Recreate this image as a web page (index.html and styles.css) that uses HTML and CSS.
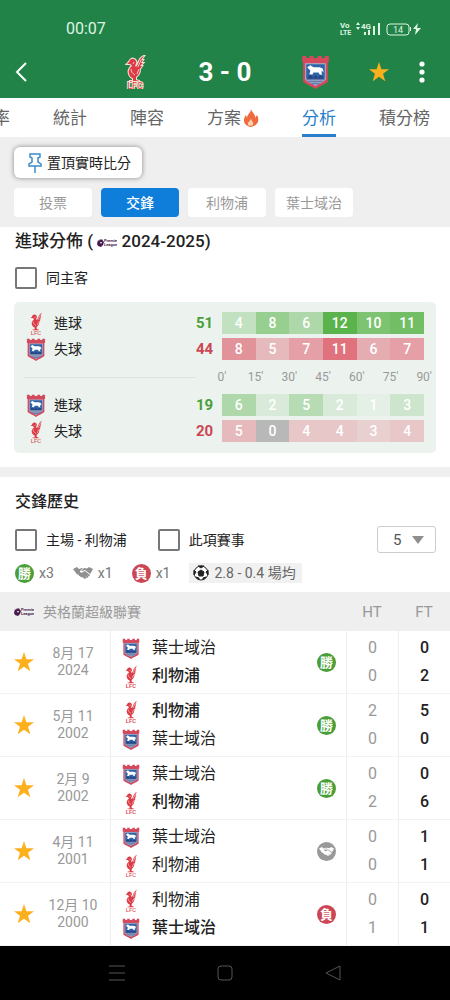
FILE: index.html
```html
<!DOCTYPE html>
<html lang="zh-Hant">
<head>
    <meta charset="utf-8">
    <meta name="viewport" content="width=device-width, initial-scale=1">
    <title>利物浦 3 - 0 葉士域治</title>
    <link rel="stylesheet" href="styles.css">
</head>
<body>
    <svg class="sprite" aria-hidden="true">
        <symbol id="lfc" viewBox="0 0 22 34">
            <path d="M20 1c-3 1-5 4-6 8l-2 3c-1-1-1-2 0-3 1-2 0-4-2-5C8 3 6 4 5 7l-2 2 3 0c1 1 2 1 2 2-3 2-4 5-3 8 1 3 3 4 4 4l0 3-3 0 0 1h9l0-1-3-1 0-3c3-2 4-5 4-8l2-3-2 0 3-3-2 0 2-3-2 0z"/>
            <path class="feather" d="M17 5l-3 7M15 14l-2 5M7 14c0 3 1 4 4 6M10 7l-1 2" fill="none"/>
            <text x="11" y="34" text-anchor="middle">LFC</text>
        </symbol>
        <symbol id="ipswich" viewBox="0 0 26 33">
            <path d="M0 1h4v2h3V1h4v2h4V1h4v2h3V1h4v6h-1v19c-3 3-8 4-12 7-4-3-9-4-12-7V7H0z" fill="#d5495d"/>
            <path d="M3 8h20v16c-3 3-7 4-10 6-3-2-7-3-10-6z" fill="#a9b3cf"/>
            <path d="M4 9h18v14H4z" fill="#2d65a8"/>
            <path d="M5 12l3-2 3 2h6l3 1 1 4-2-2 0 5-2-1-1-2h-5l-1 2-3 0 1-4-2-2z" fill="#fff"/>
            <path d="M5 22l3-3 3 3 2-3 2 3 3-3 3 3v1H5z" fill="#254583"/>
            <path d="M4 24h18M6 26h14M9 28h8" stroke="#51669f" stroke-width="1"/>
        </symbol>
        <symbol id="premier" viewBox="0 0 20 9">
            <path d="M1 2l1 1 1-2 1 1 1-1 1 2 1 1-1 3-2 2-3-1-1-2z" fill="#461b4d"/>
            <path d="M3 4l2 0-1 2z" fill="#fff"/>
            <text x="7" y="4" font-size="4">Premier</text>
            <text x="7" y="8" font-size="4">League</text>
        </symbol>
        <symbol id="star" viewBox="0 0 20 20">
            <path d="M10 0l2.400 7.200H20l-6 4.600 2.300 7.500L10 14.800l-6.300 4.500L6 11.800 0 7.200h7.600z" fill="#fdb01d"/>
        </symbol>
        <symbol id="shake" viewBox="0 0 20 12">
            <path d="M0 2l4-2 2 2 3-1 1 0-3 3c0 2 2 2 3 1l2-1 5 4-1 1.500-2-1.500 1.500 2-1.200 1-2.300-2 1.500 2-1.500 1-3-2-1 .5-1-1.500-1 0-.5-1.500-1.500 0L3 6z"/>
            <path d="M20 2l-4-2-2 1.500L11 1 8.300 3.700c.5.700 1.200.5 1.700 0L12 3l5.200 4z"/>
        </symbol>
    </svg>

    <header class="top">
        <div class="status">
            <span>00:07</span>
            <svg class="phone" viewBox="0 0 82 16" width="82" height="16">
                <g fill="#dff5e4" font-weight="700">
                    <text x="0" y="7" font-size="8">Vo</text>
                    <text x="0" y="14" font-size="7">LTE</text>
                    <text x="21" y="8" font-size="8">4G</text>
                    <text x="58" y="12" font-size="9" font-weight="400" text-anchor="middle">14</text>
                    <path d="M16 4l2-3 2 3zM16 6l2 3 2-3zM24 11h2v3h-2zM28 9h2v5h-2zM33 5h2v9h-2zM38 2h2v12h-2zM70 6h1v4h-1zM78 2l-5 6h3l-1 6 6-7h-4z"/>
                </g>
                <rect x="47" y="3" width="22" height="11" rx="3" fill="none" stroke="#dff5e4"/>
            </svg>
        </div>
        <div class="match">
            <button class="icon-btn back" aria-label="返回">
                <svg viewBox="0 0 12 20" width="12" height="20"><path d="M11 1L2 10l9 9" fill="none" stroke="#fff" stroke-width="2"/></svg>
            </button>
            <svg class="lfc outlined"><use href="#lfc"/></svg>
            <h1>3 - 0</h1>
            <svg class="ipswich"><use href="#ipswich"/></svg>
            <div class="actions">
                <button class="icon-btn" aria-label="收藏"><svg class="star"><use href="#star"/></svg></button>
                <button class="icon-btn" aria-label="更多">
                    <svg viewBox="0 0 6 24" width="6" height="24" fill="#fff"><circle cx="3" cy="4" r="2.600"/><circle cx="3" cy="12" r="2.600"/><circle cx="3" cy="20" r="2.600"/></svg>
                </button>
            </div>
        </div>
    </header>

    <nav class="tabs">
        <a href="#odds">率</a>
        <a href="#stats">統計</a>
        <a href="#lineup">陣容</a>
        <a href="#plans">方案<svg viewBox="0 0 16 18" width="16" height="18"><path d="M8 0c1 4 5 5 4 9l2-3c3 5 1 11-6 12C1 17-1 11 3 6l1 3c0-4 4-5 4-9z" fill="#ef6a3c"/><path d="M8 9c0 3 3 4 2 7-1 1-4 1-5 0-1-3 3-4 3-7z" fill="#fbd3ae"/></svg></a>
        <a href="#analysis" class="current">分析</a>
        <a href="#table">積分榜</a>
    </nav>

    <div class="sub">
        <button class="pin">
            <svg viewBox="0 0 14 20" width="14" height="20" fill="none" stroke="#3a8ccc" stroke-width="1.500"><path d="M2 1h10v3l-2 1v4l3 2v2H1v-2l3-2V5L2 4zM7 13v7"/></svg>
            置頂實時比分
        </button>
        <div class="chips">
            <button>投票</button>
            <button class="on">交鋒</button>
            <button>利物浦</button>
            <button>葉士域治</button>
        </div>
    </div>

    <section class="goals">
        <h2>進球分佈 ( <svg class="premier"><use href="#premier"/></svg> 2024-2025)</h2>
        <label class="check"><input type="checkbox">同主客</label>

        <div class="card">
            <table class="heat">
                <colgroup><col class="c-name"><col class="c-total"><col span="6"></colgroup>
                <tr class="scored">
                    <th><div class="side"><svg class="lfc"><use href="#lfc"/></svg>進球</div></th>
                    <td class="total">51</td>
                    <td style="--heat:.27">4</td><td style="--heat:.55">8</td><td style="--heat:.4">6</td><td style="--heat:.95">12</td><td style="--heat:.72">10</td><td style="--heat:.8">11</td>
                </tr>
                <tr class="lost">
                    <th><div class="side"><svg class="ipswich"><use href="#ipswich"/></svg>失球</div></th>
                    <td class="total">44</td>
                    <td style="--heat:.62">8</td><td style="--heat:.36">5</td><td style="--heat:.52">7</td><td style="--heat:.82">11</td><td style="--heat:.44">6</td><td style="--heat:.52">7</td>
                </tr>
                <tr class="axis">
                    <td><hr></td>
                    <td></td>
                    <td colspan="6"><div class="ticks"><span>0'</span><span>15'</span><span>30'</span><span>45'</span><span>60'</span><span>75'</span><span>90'</span></div></td>
                </tr>
                <tr class="scored">
                    <th><div class="side"><svg class="ipswich"><use href="#ipswich"/></svg>進球</div></th>
                    <td class="total">19</td>
                    <td style="--heat:.4">6</td><td style="--heat:.12">2</td><td style="--heat:.34">5</td><td style="--heat:.12">2</td><td style="--heat:.05">1</td><td style="--heat:.2">3</td>
                </tr>
                <tr class="lost">
                    <th><div class="side"><svg class="lfc"><use href="#lfc"/></svg>失球</div></th>
                    <td class="total">20</td>
                    <td style="--heat:.36">5</td><td class="zero">0</td><td style="--heat:.28">4</td><td style="--heat:.28">4</td><td style="--heat:.22">3</td><td style="--heat:.28">4</td>
                </tr>
            </table>
        </div>
    </section>

    <section class="history">
        <h2>交鋒歷史</h2>
        <div class="filters">
            <label class="check"><input type="checkbox">主場 - 利物浦</label>
            <label class="check"><input type="checkbox">此項賽事</label>
            <div class="count">
                <select aria-label="場數"><option>5</option></select>
                <svg viewBox="0 0 12 8" width="12" height="8"><path d="M0 0h12L6 8z" fill="#8f8f8f"/></svg>
            </div>
        </div>
        <div class="summary">
            <span><b class="badge win">勝</b>x3</span>
            <span><svg class="shake"><use href="#shake"/></svg>x1</span>
            <span><b class="badge loss">負</b>x1</span>
            <span class="avg"><svg viewBox="0 0 16 16" width="16" height="16"><circle cx="8" cy="8" r="7" fill="#fff" stroke="#222"/><path d="M8 5l3 2-1 4H6L5 7zM5 1h6L8 3zM1 5l2 2-2 3zM15 5l-2 2 2 3zM3 12l3 1 0 2zM13 12l-3 1 0 2z" fill="#222" stroke="#222"/></svg>2.8 - 0.4 場均</span>
        </div>

        <table class="games">
            <colgroup><col class="c-star"><col class="c-date"><col><col class="c-score"><col class="c-score"></colgroup>
            <thead>
                <tr>
                    <th colspan="3"><div class="league"><svg class="premier"><use href="#premier"/></svg>英格蘭超級聯賽</div></th>
                    <th>HT</th>
                    <th>FT</th>
                </tr>
            </thead>
            <tbody>
                <tr>
                    <td><button class="icon-btn" aria-label="收藏"><svg class="star"><use href="#star"/></svg></button></td>
                    <td class="date">8月 17<br>2024</td>
                    <td class="teams"><div>
                        <ul>
                            <li><svg class="ipswich"><use href="#ipswich"/></svg>葉士域治</li>
                            <li class="won"><svg class="lfc"><use href="#lfc"/></svg>利物浦</li>
                        </ul>
                        <b class="badge win">勝</b>
                    </div></td>
                    <td class="ht">0<br>0</td>
                    <td class="ft">0<br>2</td>
                </tr>
                <tr>
                    <td><button class="icon-btn" aria-label="收藏"><svg class="star"><use href="#star"/></svg></button></td>
                    <td class="date">5月 11<br>2002</td>
                    <td class="teams"><div>
                        <ul>
                            <li class="won"><svg class="lfc"><use href="#lfc"/></svg>利物浦</li>
                            <li><svg class="ipswich"><use href="#ipswich"/></svg>葉士域治</li>
                        </ul>
                        <b class="badge win">勝</b>
                    </div></td>
                    <td class="ht">2<br>0</td>
                    <td class="ft">5<br>0</td>
                </tr>
                <tr>
                    <td><button class="icon-btn" aria-label="收藏"><svg class="star"><use href="#star"/></svg></button></td>
                    <td class="date">2月 9<br>2002</td>
                    <td class="teams"><div>
                        <ul>
                            <li><svg class="ipswich"><use href="#ipswich"/></svg>葉士域治</li>
                            <li class="won"><svg class="lfc"><use href="#lfc"/></svg>利物浦</li>
                        </ul>
                        <b class="badge win">勝</b>
                    </div></td>
                    <td class="ht">0<br>2</td>
                    <td class="ft">0<br>6</td>
                </tr>
                <tr>
                    <td><button class="icon-btn" aria-label="收藏"><svg class="star"><use href="#star"/></svg></button></td>
                    <td class="date">4月 11<br>2001</td>
                    <td class="teams"><div>
                        <ul>
                            <li><svg class="ipswich"><use href="#ipswich"/></svg>葉士域治</li>
                            <li><svg class="lfc"><use href="#lfc"/></svg>利物浦</li>
                        </ul>
                        <b class="badge draw"><svg class="shake"><use href="#shake"/></svg></b>
                    </div></td>
                    <td class="ht">0<br>0</td>
                    <td class="ft">1<br>1</td>
                </tr>
                <tr>
                    <td><button class="icon-btn" aria-label="收藏"><svg class="star"><use href="#star"/></svg></button></td>
                    <td class="date">12月 10<br>2000</td>
                    <td class="teams"><div>
                        <ul>
                            <li><svg class="lfc"><use href="#lfc"/></svg>利物浦</li>
                            <li class="won"><svg class="ipswich"><use href="#ipswich"/></svg>葉士域治</li>
                        </ul>
                        <b class="badge loss">負</b>
                    </div></td>
                    <td class="ht">0<br>1</td>
                    <td class="ft">0<br>1</td>
                </tr>
            </tbody>
        </table>
    </section>

    <footer class="keys">
        <button class="icon-btn" aria-label="選單"><svg viewBox="0 0 16 16" width="16" height="16"><path d="M0 1h16M0 8h16M0 15h16"/></svg></button>
        <button class="icon-btn" aria-label="主頁"><svg viewBox="0 0 16 16" width="16" height="16"><rect x="1" y="1" width="14" height="14" rx="3"/></svg></button>
        <button class="icon-btn" aria-label="返回"><svg viewBox="0 0 16 16" width="16" height="16"><path d="M15 1v14L1 8z"/></svg></button>
    </footer>
</body>
</html>
```

FILE: styles.css
```css
* {
    box-sizing: border-box;
}
body {
    margin: 0;
    min-height: 100vh;
    display: flex;
    flex-direction: column;
    background: #fff;
    color: #222;
    font-family: Roboto, "Noto Sans CJK TC", sans-serif;
    font-size: 14px;
    line-height: 20px;
}
button, select, input {
    font: inherit;
    color: inherit;
    margin: 0;
}
button {
    border: none;
    background: none;
    padding: 0;
    cursor: pointer;
}
svg {
    display: block;
    flex: none;
}
h1, h2 {
    margin: 0;
}
h2 {
    font-size: 16px;
    line-height: 24px;
    font-weight: 500;
}
.sprite {
    display: none;
}
.icon-btn {
    display: flex;
    align-items: center;
    justify-content: center;
}

/* crests and small icons */
.lfc {
    width: 20px;
    height: 23px;
    fill: #dd3c46;
    font-size: 9px;
}
.feather {
    stroke: #f8c8c8;
    stroke-width: 1;
}
.ipswich {
    width: 20px;
    height: 23px;
}
.star {
    width: 20px;
    height: 20px;
}
.premier {
    width: 20px;
    height: 9px;
    fill: #461b4d;
    font-weight: 700;
}
.shake {
    width: 20px;
    height: 12px;
    fill: #8f8f8f;
}
.badge {
    display: flex;
    align-items: center;
    justify-content: center;
    width: 19px;
    height: 19px;
    border-radius: 50%;
    color: #fff;
    font-size: 13px;
    line-height: 19px;
}
.win {
    background: #4a9e38;
}
.loss {
    background: #cc4654;
}
.draw {
    background: #999;
}
.draw .shake {
    width: 15px;
    height: 9px;
    fill: #fff;
}

/* header */
.top {
    background: #228348;
    color: #fff;
    height: 98px;
}
.status {
    display: flex;
    justify-content: space-between;
    align-items: center;
    height: 46px;
    padding: 12px 28px 0 66px;
    font-size: 16px;
    color: #dff5e4;
}
.match {
    display: grid;
    grid-template-columns: 1fr 40px 140px 40px 1fr;
    align-items: center;
    justify-items: center;
    height: 52px;
}
.match h1 {
    font-size: 26px;
    line-height: 32px;
    font-weight: 700;
}
.match .back {
    justify-self: start;
    margin-left: 15px;
}
.match .lfc {
    width: 22px;
    height: 34px;
}
.outlined {
    stroke: #fbe3d6;
    stroke-width: 2;
    paint-order: stroke;
}
.match .ipswich {
    width: 27px;
    height: 34px;
}
.actions {
    justify-self: end;
    display: flex;
    gap: 30px;
    margin-right: 25px;
}

.tabs {
    display: flex;
    gap: 43px;
    margin-left: -7px;
    height: 39px;
    overflow: hidden;
    white-space: nowrap;
    font-size: 17px;
    line-height: 32px;
}
.tabs a {
    display: flex;
    align-items: center;
    flex: none;
    color: #666;
    text-decoration: none;
    border-bottom: 3px solid transparent;
    padding-top: 4px;
}
.tabs svg {
    margin-left: 2px;
}
.tabs .current {
    color: #2b7fca;
    border-color: #2b7fca;
}

.sub {
    background: #efefef;
    padding: 10px 14px;
}
.pin {
    display: flex;
    align-items: center;
    gap: 5px;
    height: 31px;
    padding: 0 11px 0 14px;
    background: #fff;
    border-radius: 6px;
    box-shadow: 0 0 5px rgba(0,0,0,0.45);
}
.chips {
    display: flex;
    gap: 9px;
    margin-top: 10px;
}
.chips button {
    width: 78px;
    height: 29px;
    border-radius: 4px;
    background: #fff;
    color: #999;
}
.chips .on {
    background: #0f7edb;
    color: #fff;
    font-weight: 500;
}

.check {
    display: flex;
    align-items: center;
    gap: 9px;
}
.check input {
    appearance: none;
    width: 22px;
    height: 22px;
    border: 2px solid #777;
    border-radius: 2px;
}
.check input:checked {
    background: #0f7edb;
}

/* goal distribution */
.goals {
    padding: 2px 14px 14px;
    border-bottom: 10px solid #efefef;
}
.goals h2 {
    font-size: 17px;
    font-weight: 500;
    padding-left: 1px;
}
.goals h2 svg {
    display: inline-block;
    vertical-align: middle;
}
.goals .check {
    margin: 14px 0 13px 1px;
}
.card {
    background: #ecf3ef;
    border-radius: 5px;
    padding: 6px 12px 7px 10px;
}
.heat {
    width: 100%;
    table-layout: fixed;
    border-collapse: separate;
    border-spacing: 0 4px;
}
.c-name {
    width: 43%;
}
.c-total {
    width: 26px;
}
.heat tr {
    height: 22px;
}
.heat th, .heat td {
    padding: 0;
    line-height: 22px;
    text-align: center;
    font-weight: 500;
    color: #fff;
}
.heat th {
    color: #222;
    font-weight: 400;
}
.side {
    display: flex;
    align-items: center;
    gap: 8px;
    height: 22px;
    padding-left: 2px;
}
.scored td {
    background: rgba(82,176,65,var(--heat));
}
.lost td {
    background: rgba(220,85,100,var(--heat));
}
.heat .zero {
    background: #b8b8b8;
}
.heat .total {
    background: none;
    font-size: 15px;
    font-weight: 700;
    text-align: left;
}
.scored .total {
    color: #4a9e38;
}
.lost .total {
    color: #cc4654;
}
.heat .axis {
    height: 26px;
}
.axis hr {
    margin: 0;
    border: none;
    border-top: 1px solid #dde3df;
}
.ticks {
    display: flex;
    justify-content: space-between;
    margin: 0 -17px;
    color: #999;
    font-size: 12px;
    font-weight: 400;
}
.ticks span {
    flex: 1;
}

/* head to head */
.history {
    flex: 1;
    padding-top: 13px;
}
.history h2 {
    padding-left: 15px;
}
.filters {
    display: flex;
    align-items: center;
    gap: 31px;
    margin: 12px 14px 10px 15px;
}
.count {
    display: grid;
    align-items: center;
    margin-left: auto;
}
.count select, .count svg {
    grid-area: 1 / 1;
}
.count select {
    appearance: none;
    width: 59px;
    height: 27px;
    padding: 0 15px;
    border: 1px solid #ccc;
    border-radius: 3px;
    background: #fff;
    color: #555;
    font-size: 15px;
}
.count svg {
    justify-self: end;
    margin-right: 12px;
    pointer-events: none;
}
.summary {
    display: flex;
    gap: 19px;
    padding: 0 15px 9px;
    color: #777;
}
.summary span {
    display: flex;
    align-items: center;
    gap: 5px;
}
.summary .avg {
    padding: 0 6px 0 4px;
    background: #f1f1f1;
    color: #666;
}

.games {
    width: 100%;
    table-layout: fixed;
    border-collapse: separate;
    border-spacing: 0;
}
.c-star {
    width: 36px;
}
.c-date {
    width: 75px;
}
.c-score {
    width: 52px;
}
.games th, .games td {
    padding: 0;
    text-align: center;
}
.games th {
    height: 39px;
    background: #efefef;
    color: #999;
    font-size: 15px;
    font-weight: 400;
}
.league {
    display: flex;
    align-items: center;
    gap: 9px;
    padding-left: 14px;
    font-size: 14px;
}
.games td {
    height: 63px;
    border-bottom: 1px solid #f3f3f3;
}
.games td .icon-btn {
    margin-left: 14px;
}
.games .date {
    color: #999;
    line-height: 17px;
    border-right: 1px solid #eee;
}
.teams > div {
    display: flex;
    align-items: center;
    justify-content: space-between;
    padding: 0 10px;
}
.teams ul {
    list-style: none;
    margin: 0;
    padding: 0;
}
.teams li {
    display: flex;
    align-items: center;
    gap: 11px;
    height: 28px;
    font-size: 16px;
}
.teams svg.ipswich {
    height: 21px;
}
.won {
    font-weight: 500;
}
.games .ht, .games .ft {
    border-left: 1px solid #eee;
    font-size: 16px;
    line-height: 28px;
    color: #999;
}
.games .ft {
    color: #222;
    font-weight: 500;
}

.keys {
    display: flex;
    height: 54px;
    padding: 0 14%;
    background: #000;
}
.keys button {
    flex: 1;
}
.keys svg {
    fill: none;
    stroke: #555;
    stroke-width: 1;
}
```
